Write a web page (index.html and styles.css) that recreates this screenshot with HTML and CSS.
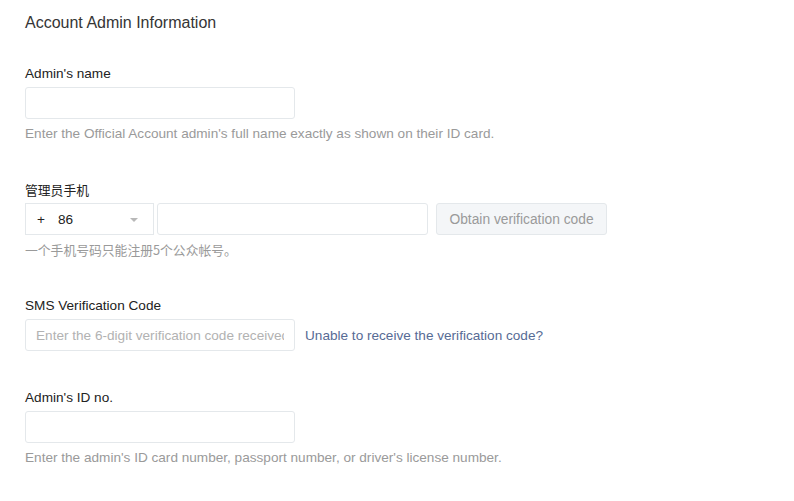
FILE: index.html
```html
<!DOCTYPE html>
<html lang="en">
<head>
<meta charset="utf-8">
<title>Account Admin Information</title>
<link rel="stylesheet" href="styles.css">
</head>
<body>
<div class="page">
  <h2 class="title">Account Admin Information</h2>

  <div class="item">
    <label class="label">Admin's name</label>
    <input class="input" type="text">
    <p class="help">Enter the Official Account admin's full name exactly as shown on their ID card.</p>
  </div>

  <div class="item">
    <label class="label cjk">管理员手机</label>
    <div class="phone-row">
      <div class="select">
        <span class="plus">+</span>
        <span class="code">86</span>
        <span class="arrow"></span>
      </div>
      <input class="input phone" type="text">
      <button class="btn" type="button">Obtain verification code</button>
    </div>
    <p class="help cjk">一个手机号码只能注册5个公众帐号。</p>
  </div>

  <div class="item item-nohelp">
    <label class="label">SMS Verification Code</label>
    <div class="sms-row">
      <input class="input" type="text" placeholder="Enter the 6-digit verification code received">
      <a class="link" href="#">Unable to receive the verification code?</a>
    </div>
  </div>

  <div class="item">
    <label class="label">Admin's ID no.</label>
    <input class="input" type="text">
    <p class="help">Enter the admin's ID card number, passport number, or driver's license number.</p>
  </div>
</div>
</body>
</html>
```

FILE: styles.css
```css
* { box-sizing: border-box; }
html, body { margin: 0; padding: 0; background: #fff; }
body {
  font-family: "Liberation Sans", "Noto Sans CJK SC", sans-serif;
  font-size: 13.6px;
  line-height: 20px;
  color: #353535;
}
.page { padding: 13px 25px 0; }
.title {
  margin: 0 0 30px;
  font-size: 16px;
  font-weight: normal;
  line-height: 20px;
  color: #353535;
}
.item { margin-bottom: 35px; display: flex; flex-direction: column; align-items: flex-start; }
.item-nohelp { margin-bottom: 36px; }
.label { display: block; line-height: 20px; padding-top: 1px; margin-bottom: 3px; color: #222; }
.cjk { font-family: "Noto Sans CJK SC", sans-serif; font-size: 12.8px; }
.input {
  display: block;
  width: 270px;
  height: 32px;
  margin: 0;
  padding: 0 10px;
  border: 1px solid #e4e8eb;
  border-radius: 3px;
  background: #fff;
  font: inherit;
  color: #353535;
  outline: none;
}
.input::placeholder { color: #b2b2b2; }
.help { margin: 5px 0 0; line-height: 20px; color: #9a9a9a; }
.phone-row { display: flex; align-items: center; }
.select {
  width: 129px;
  height: 32px;
  border: 1px solid #e4e8eb;
  display: flex;
  align-items: center;
  padding: 1px 0 0 11px;
  position: relative;
  color: #222;
}
.plus { width: 21px; }
.arrow {
  position: absolute;
  left: 104px;
  top: 14px;
  width: 0; height: 0;
  border-left: 4px solid transparent;
  border-right: 4px solid transparent;
  border-top: 4px solid #b8b8b8;
}
.phone { width: 271px; margin-left: 3px; }
.btn {
  margin-left: 8px;
  width: 171px;
  height: 32px;
  padding: 1px 0 0;
  border: 1px solid #e4e8eb;
  border-radius: 3px;
  background: #f4f6f8;
  color: #9a9a9a;
  font: inherit;
  font-size: 13.8px;
}
.sms-row { display: flex; align-items: center; }
.sms-row .input { padding-top: 1px; }
.link { margin-left: 10px; padding-top: 1px; color: #576b95; text-decoration: none; }
```
